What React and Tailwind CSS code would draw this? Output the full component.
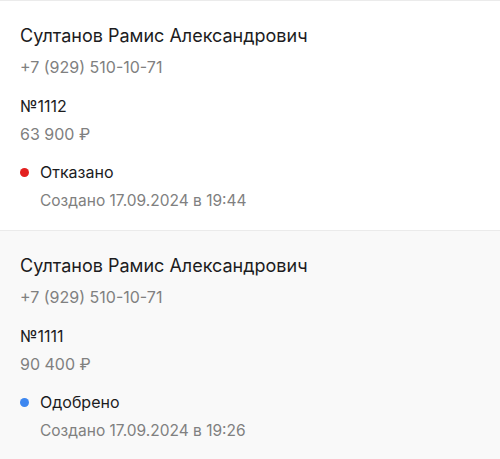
const orders = [
  {
    name: "Султанов Рамис Александрович",
    phone: "+7 (929) 510-10-71",
    number: "№1112",
    sum: "63 900 ₽",
    status: "Отказано",
    dot: "bg-[#e3201f]",
    created: "Создано 17.09.2024 в 19:44",
    bg: "bg-white",
  },
  {
    name: "Султанов Рамис Александрович",
    phone: "+7 (929) 510-10-71",
    number: "№1111",
    sum: "90 400 ₽",
    status: "Одобрено",
    dot: "bg-[#3d87f0]",
    created: "Создано 17.09.2024 в 19:26",
    bg: "bg-[#f9f9f9]",
  },
];

const Card = ({ o }) => (
  <div className={`${o.bg} border-t border-[#ebebeb] h-[230px] px-5 pt-[24px]`}>
    <p className="text-[18px] leading-[22px] text-[#1c1c1e]">{o.name}</p>
    <p className="text-[16px] leading-[20px] text-[#808080] mt-[10px]">{o.phone}</p>
    <p className="text-[16px] leading-[20px] text-[#1c1c1e] mt-[19px]">{o.number}</p>
    <p className="text-[16px] leading-[20px] text-[#808080] mt-[8px]">{o.sum}</p>
    <div className="flex items-center mt-[18px]">
      <span className={`w-[9px] h-[9px] rounded-full ${o.dot}`}></span>
      <p className="text-[16px] leading-[20px] text-[#1c1c1e] ml-[11px]">{o.status}</p>
    </div>
    <p className="text-[15.5px] leading-[20px] text-[#808080] mt-[9px] ml-5">{o.created}</p>
  </div>
);

export default function App() {
  return (
    <div className="w-[500px] h-[459px] overflow-hidden bg-white font-['Inter',sans-serif]">
      {orders.map((o, i) => (
        <Card key={i} o={o} />
      ))}
    </div>
  );
}
